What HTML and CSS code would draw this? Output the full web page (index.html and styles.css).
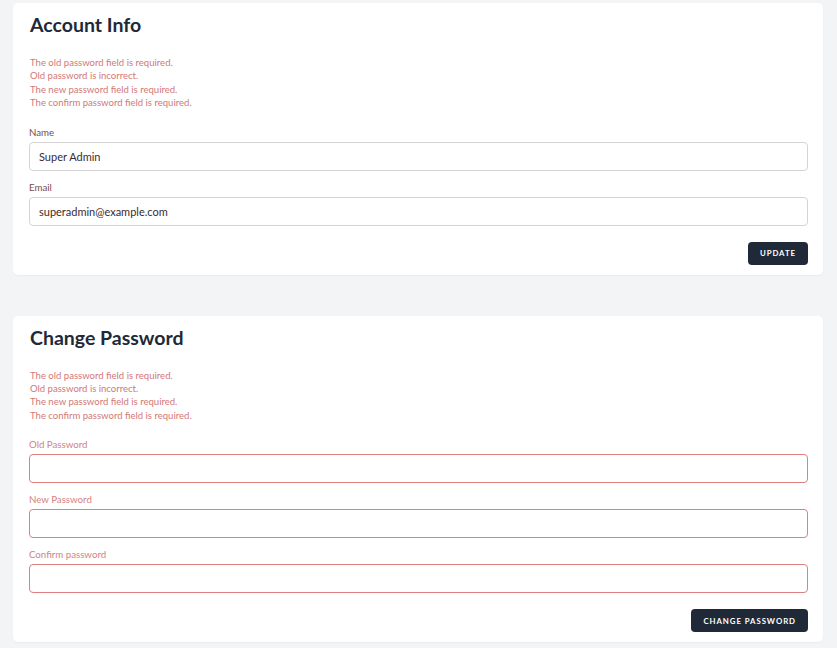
FILE: index.html
```html
<!DOCTYPE html>
<html lang="en">
<head>
<meta charset="utf-8">
<title>Profile</title>
<link rel="stylesheet" href="styles.css">
</head>
<body>
<main class="page">
  <section class="card">
    <h2 class="card-title">Account Info</h2>
    <ul class="errors">
      <li>The old password field is required.</li>
      <li>Old password is incorrect.</li>
      <li>The new password field is required.</li>
      <li>The confirm password field is required.</li>
    </ul>
    <div class="field">
      <label class="label">Name</label>
      <div class="input">Super Admin</div>
    </div>
    <div class="field">
      <label class="label">Email</label>
      <div class="input">superadmin@example.com</div>
    </div>
    <div class="actions"><button class="btn">Update</button></div>
  </section>

  <section class="card">
    <h2 class="card-title">Change Password</h2>
    <ul class="errors">
      <li>The old password field is required.</li>
      <li>Old password is incorrect.</li>
      <li>The new password field is required.</li>
      <li>The confirm password field is required.</li>
    </ul>
    <div class="field invalid">
      <label class="label">Old Password</label>
      <div class="input"></div>
    </div>
    <div class="field invalid">
      <label class="label">New Password</label>
      <div class="input"></div>
    </div>
    <div class="field invalid">
      <label class="label">Confirm password</label>
      <div class="input"></div>
    </div>
    <div class="actions"><button class="btn">Change Password</button></div>
  </section>
</main>
</body>
</html>
```

FILE: styles.css
```css
* { box-sizing: border-box; }
html, body { margin: 0; padding: 0; }
body {
  background: #f3f4f6;
  font-family: "Lato", "Open Sans", sans-serif;
  width: 837px;
  height: 648px;
  overflow: hidden;
}
.page {
  padding: 3px 14px 0 13px;
  display: flex;
  flex-direction: column;
  gap: 41px;
}
.card {
  background: #ffffff;
  border-radius: 5px;
  padding: 10px 15px 10px 16px;
  box-shadow: 0 1px 2px rgba(0,0,0,0.04);
}
.card-title {
  margin: 0 0 0 1px;
  font-size: 19.5px;
  line-height: 24px;
  font-weight: 700;
  color: #1f2937;
}
.errors {
  list-style: none;
  margin: 19px 0 0 1px;
  padding: 0;
  font-size: 9.55px;
  line-height: 13.4px;
  color: #d27878;
}
.field { margin-top: 10px; }
.errors + .field { margin-top: 16px; }
.label {
  display: block;
  font-size: 9.7px;
  line-height: 12px;
  color: #7a4b4b;
  margin-bottom: 4px;
}
.input {
  height: 29px;
  border: 1px solid #d6d3d5;
  border-radius: 4px;
  padding: 0 9px;
  display: flex;
  align-items: center;
  font-size: 11px;
  color: #3a2b2e;
}
.invalid .label { color: #d38282; }
.invalid .input { border-color: #dc8080; }
.actions {
  display: flex;
  justify-content: flex-end;
  margin-top: 16px;
}
.btn {
  background: #1f2937;
  color: #ffffff;
  border: 0;
  border-radius: 4px;
  height: 23px;
  padding: 0 12px;
  font-family: "Lato", sans-serif;
  font-size: 7.8px;
  font-weight: 700;
  letter-spacing: 0.95px;
  text-transform: uppercase;
}
```
